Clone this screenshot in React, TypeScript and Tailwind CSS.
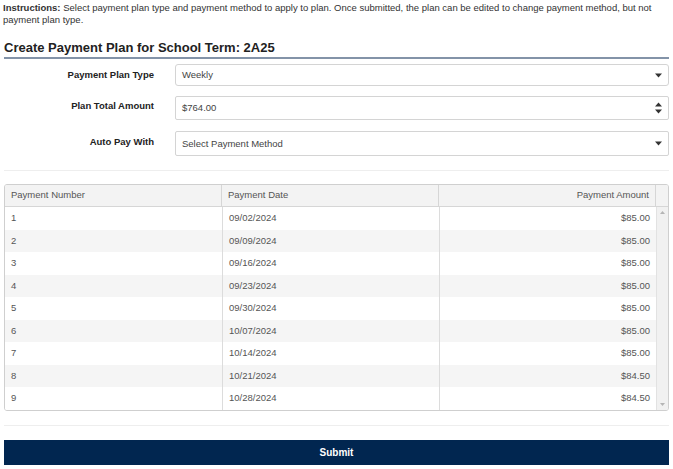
import React from "react";

const rows = [
  ["1", "09/02/2024", "$85.00"],
  ["2", "09/09/2024", "$85.00"],
  ["3", "09/16/2024", "$85.00"],
  ["4", "09/23/2024", "$85.00"],
  ["5", "09/30/2024", "$85.00"],
  ["6", "10/07/2024", "$85.00"],
  ["7", "10/14/2024", "$85.00"],
  ["8", "10/21/2024", "$84.50"],
  ["9", "10/28/2024", "$84.50"],
];

function Caret() {
  return (
    <svg width="7" height="5" viewBox="0 0 7 5">
      <path d="M0 0.5 L7 0.5 L3.5 4.5 Z" fill="#333" />
    </svg>
  );
}

export default function App() {
  return (
    <div
      className="w-[673px] h-[469px] bg-white text-[#333] overflow-hidden"
      style={{ fontFamily: '"Liberation Sans", Arial, sans-serif' }}
    >
      <p className="px-[3px] pt-[2px] text-[9.5px] leading-[12px]">
        <b>Instructions:</b> Select payment plan type and payment method to apply to plan. Once submitted, the plan can be edited to change payment method, but not payment plan type.
      </p>
      <div className="mx-[4px] mt-[13px] border-b-2 border-[#8393a8] pb-[1px]">
        <h1 className="text-[13px] font-bold leading-[17px] text-[#222]">Create Payment Plan for School Term: 2A25</h1>
      </div>

      <div className="mx-[4px] mt-[5px] flex flex-col">
        <div className="flex items-start">
          <div className="w-[150px] text-right text-[9.5px] font-bold pt-[4px] text-[#222]">Payment Plan Type</div>
          <div className="ml-[21px] flex-1 h-[22px] border border-[#d4d4d4] rounded-[3px] flex items-center justify-between pl-[6px] pr-[6px] text-[9.5px] text-[#444]">
            <span>Weekly</span>
            <Caret />
          </div>
        </div>
        <div className="flex items-start mt-[10px]">
          <div className="w-[150px] text-right text-[9.5px] font-bold pt-[3px] text-[#222]">Plan Total Amount</div>
          <div className="ml-[21px] flex-1 h-[24px] border border-[#d4d4d4] rounded-[2px] flex items-center justify-between pl-[6px] pr-[6px] text-[9.5px] text-[#444]">
            <span className="pt-[1px]">$764.00</span>
            <svg width="7" height="12" viewBox="0 0 7 12">
              <path d="M0 4.5 L7 4.5 L3.5 0.5 Z" fill="#333" />
              <path d="M0 7.5 L7 7.5 L3.5 11.5 Z" fill="#333" />
            </svg>
          </div>
        </div>
        <div className="flex items-start mt-[11px]">
          <div className="w-[150px] text-right text-[9.5px] font-bold pt-[4px] text-[#222]">Auto Pay With</div>
          <div className="ml-[21px] flex-1 h-[25px] border border-[#d4d4d4] rounded-[2px] flex items-center justify-between pl-[6px] pr-[6px] text-[9.5px] text-[#444]">
            <span className="pt-[1px]">Select Payment Method</span>
            <Caret />
          </div>
        </div>
      </div>

      <div className="mx-[4px] mt-[14px] border-t border-[#eeeeee]" />

      <div className="mx-[4px] mt-[13px] border border-[#cfcfcf] rounded-[3px] overflow-hidden text-[9.5px] text-[#555]">
        <div className="flex h-[22px] bg-[#f3f3f3] border-b border-[#d6d6d6]">
          <div className="w-[217px] pl-[6px] flex items-center border-r border-[#d6d6d6]">Payment Number</div>
          <div className="w-[217px] pl-[6px] flex items-center border-r border-[#d6d6d6]">Payment Date</div>
          <div className="flex-1 pr-[6px] flex items-center justify-end border-r border-[#d6d6d6]">Payment Amount</div>
          <div className="w-[12px]" />
        </div>
        <div className="flex">
          <div className="flex-1">
            {rows.map((r, i) => (
              <div key={i} className={`flex h-[22.5px] ${i % 2 === 1 ? "bg-[#f5f5f5]" : "bg-white"}`}>
                <div className="w-[217px] pl-[6px] flex items-center">{r[0]}</div>
                <div className="w-[217px] pl-[6px] flex items-center border-l border-[#dcdcdc]">{r[1]}</div>
                <div className="flex-1 pr-[6px] flex items-center justify-end border-l border-[#dcdcdc]">{r[2]}</div>
              </div>
            ))}
          </div>
          <div className="w-[12px] bg-[#f1f1f1] border-l border-[#e2e2e2] flex flex-col items-center justify-between py-[4px]">
            <svg width="5" height="3" viewBox="0 0 5 3"><path d="M0 3 L5 3 L2.5 0 Z" fill="#b5b5b5" /></svg>
            <svg width="5" height="3" viewBox="0 0 5 3"><path d="M0 0 L5 0 L2.5 3 Z" fill="#b5b5b5" /></svg>
          </div>
        </div>
      </div>

      <div className="mx-[4px] mt-[14px] border-t border-[#eeeeee]" />

      <button className="mx-[4px] mt-[14px] w-[665px] h-[25px] bg-[#012650] text-white text-[10px] font-bold flex items-center justify-center">
        Submit
      </button>
    </div>
  );
}
